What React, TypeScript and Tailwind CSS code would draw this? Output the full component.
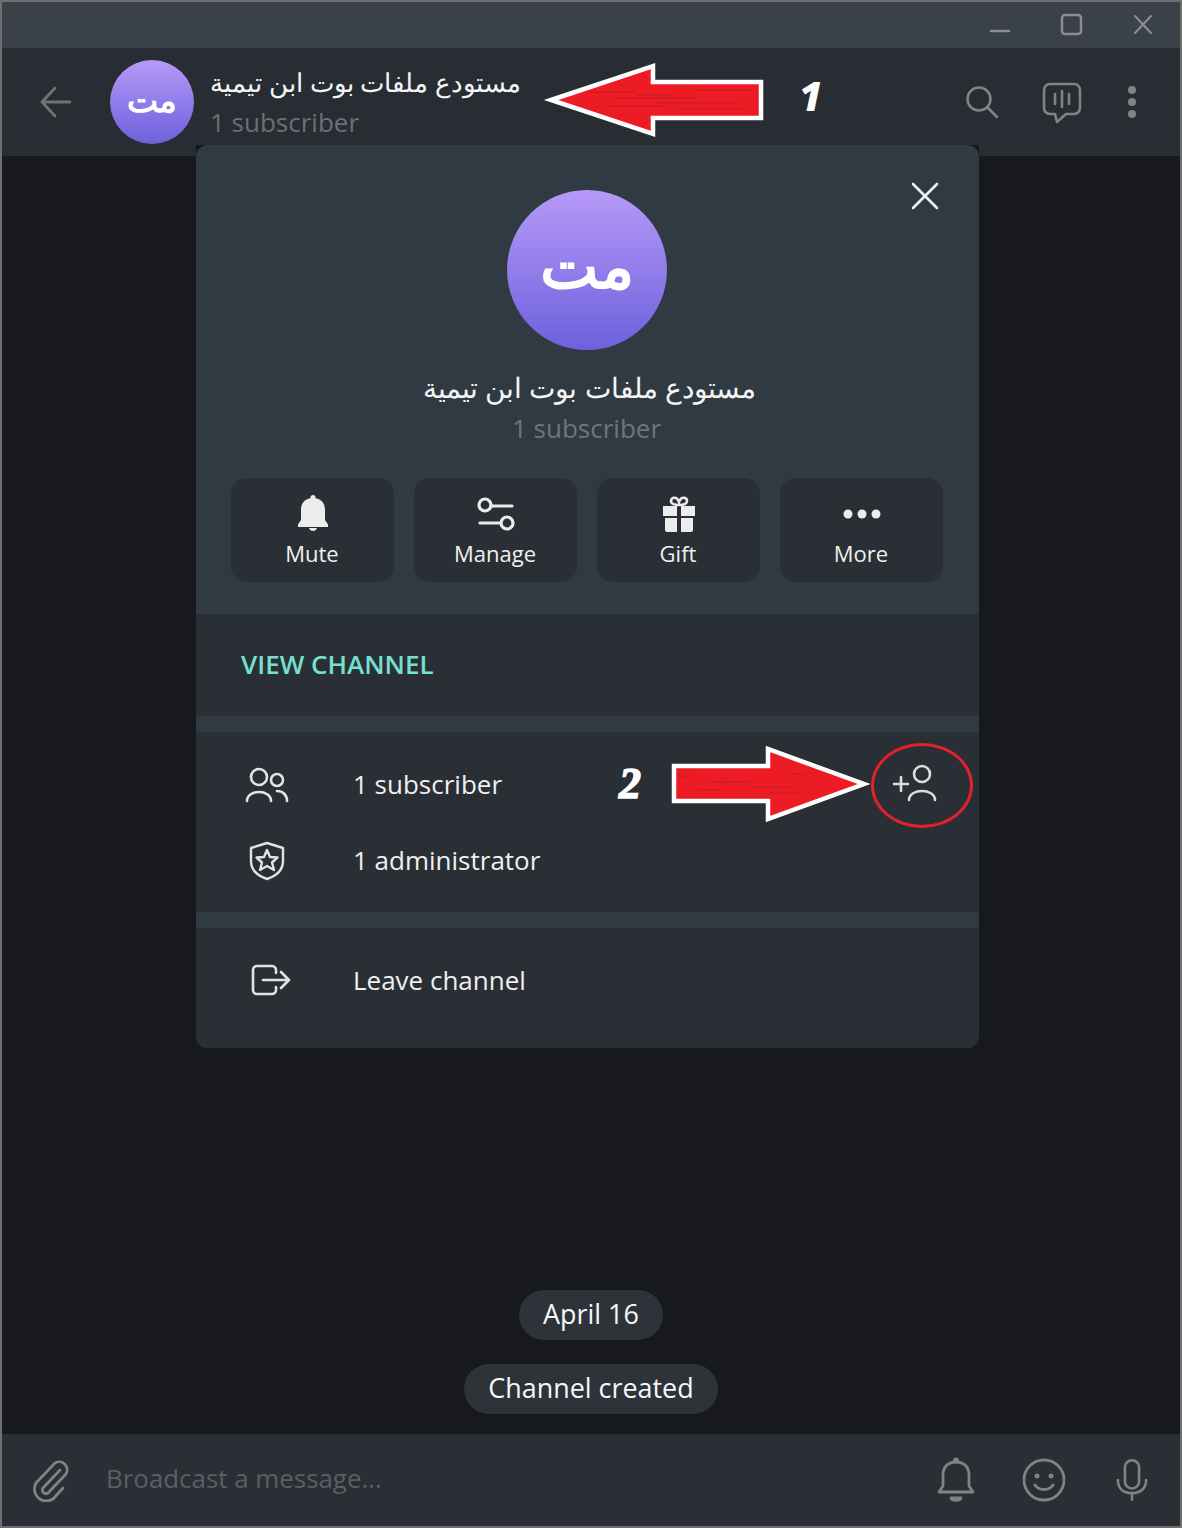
import { X } from "lucide-react";

const font = "font-['Open_Sans',_'Noto_Sans',_sans-serif]";

const streaks = [
  [40, 30, 90],
  [70, 36, 150],
  [110, 41, 190],
  [150, 28, 205],
  [60, 44, 120],
  [130, 47, 200],
  [90, 33, 125],
];

function RedArrow({ left }: { left?: boolean }) {
  return (
    <svg viewBox={left ? "0 0 216 78" : "0 0 200 78"} className="w-full h-full overflow-visible">
      <path
        d={
          left
            ? "M4 38 L106 4 L106 20 L214 20 L214 56 L106 56 L106 72 Z"
            : "M4 21 L98 21 L98 4 L194 39 L98 74 L98 56 L4 56 Z"
        }
        fill="#ed1c24"
        stroke="#fff"
        strokeWidth="4.5"
      />
      {streaks.map(([x1, y, x2], i) => (
        <path
          key={i}
          d={left ? `M${x1} ${y}H${x2}` : `M${x1 - 32} ${y + 1}H${x2 - 70}`}
          stroke="#8f1526"
          strokeOpacity="0.22"
          strokeWidth="2"
        />
      ))}
    </svg>
  );
}

function ActionButton({ label, children }: { label: string; children: React.ReactNode }) {
  return (
    <div className="w-[163px] h-[104px] rounded-[16px] bg-[#2a2e35] flex flex-col items-center pt-[14px]">
      <div className="w-[40px] h-[44px] pl-[2px] flex items-center justify-center">{children}</div>
      <span className="text-[22px] leading-[30px] text-[#f0f0f0] mt-[2px]">{label}</span>
    </div>
  );
}

function InfoRow({ icon, label }: { icon: React.ReactNode; label: string }) {
  return (
    <div className="flex items-center pl-[49px] h-[76px]">
      <div className="w-[108px] flex items-center translate-y-[1px]">{icon}</div>
      <span className="text-[26px] text-[#f0f0f0]">{label}</span>
    </div>
  );
}

export default function App() {
  return (
    <div className={`relative w-[1182px] h-[1528px] border-2 border-[#6f6f6f] flex flex-col overflow-hidden bg-[#18191c] ${font}`}>
      {/* title bar */}
      <div className="h-[46px] bg-[#3a4149] flex items-start justify-end pr-[24px] shrink-0 text-[#8b8f94]">
        <svg width="176" height="46" viewBox="0 0 176 46" fill="none" stroke="currentColor" strokeLinecap="round">
          <path d="M11 29H29" strokeWidth="2.5" />
          <rect x="82" y="13" width="19" height="19" rx="3" strokeWidth="2.5" />
          <path d="M155 14L171 31M171 14L155 31" strokeWidth="2" />
        </svg>
      </div>

      {/* chat header */}
      <div className="h-[108px] bg-[#282c33] flex items-center shrink-0 pl-[38px] pr-[43px]">
        <svg width="32" height="32" viewBox="0 0 32 32" fill="none" stroke="#6f7276" strokeWidth="2.8" strokeLinecap="round" strokeLinejoin="round">
          <path d="M30 16H2M15 2L2 16L15 30" />
        </svg>
        <div className="ml-[38px] w-[84px] h-[84px] rounded-full bg-gradient-to-b from-[#b799f8] to-[#6e60dc] flex items-center justify-center pb-[5px] text-white text-[33px] font-bold">
          مت
        </div>
        <div className="ml-[16px] pt-[2px] flex flex-col">
          <span dir="rtl" className="text-[26px] leading-[36px] font-medium text-[#f5f5f5]">
            مستودع ملفات بوت ابن تيمية
          </span>
          <span className="text-[26px] leading-[40px] mt-[2px] text-[#6c7075]">1 subscriber</span>
        </div>
        <div className="ml-auto flex items-center text-[#7f8286]">
          <svg className="translate-x-[1px]" width="34" height="34" viewBox="0 0 34 34" fill="none" stroke="currentColor" strokeWidth="2.6" strokeLinecap="round">
            <circle cx="14" cy="14" r="11.5" />
            <path d="M22.5 22.5L32 32" />
          </svg>
          <svg className="ml-[44px] translate-y-[1px]" width="40" height="42" viewBox="0 0 40 42" fill="none" stroke="currentColor" strokeWidth="2.6" strokeLinecap="round" strokeLinejoin="round">
            <path d="M8 2H32A6 6 0 0 1 38 8V26A6 6 0 0 1 32 32H24L15 40L13 32H8A6 6 0 0 1 2 26V8A6 6 0 0 1 8 2Z" />
            <path d="M13 12V22M20 9V25M27 12V22" />
          </svg>
          <svg className="ml-[45px]" width="10" height="34" viewBox="0 0 10 34" fill="currentColor">
            <circle cx="5" cy="5" r="4" />
            <circle cx="5" cy="17" r="4" />
            <circle cx="5" cy="29" r="4" />
          </svg>
        </div>
      </div>

      {/* chat body */}
      <div className="flex-1 flex flex-col items-center justify-end pb-[20px] gap-[24px]">
        <div className="h-[50px] px-[24px] pb-[2px] rounded-full bg-[#2e333a] flex items-center text-[#f7f7f7] text-[26.9px] font-medium">April 16</div>
        <div className="h-[50px] px-[24px] pb-[2px] rounded-full bg-[#2e333a] flex items-center text-[#f7f7f7] text-[26.9px] font-medium">Channel created</div>
      </div>

      {/* composer */}
      <div className="h-[92px] bg-[#2a2e35] flex items-center shrink-0 pl-[28px] pr-[32px] text-[#7f8286]">
        <svg width="42" height="44" viewBox="0 0 42 44" fill="none" stroke="currentColor" strokeWidth="2.8" strokeLinecap="round" strokeLinejoin="round">
          <path d="M30 12L13 30A3.6 3.6 0 0 0 18 35L36 16A8 8 0 0 0 25 5L6 25A12 12 0 0 0 23 41L33 30" />
        </svg>
        <span className="ml-[34px] pb-[4px] text-[25.9px] text-[#5b5f64]">Broadcast a message...</span>
        <div className="ml-auto flex items-center gap-[47px]">
          <svg width="38" height="46" viewBox="0 0 38 46" fill="none" stroke="currentColor" strokeWidth="2.8" strokeLinecap="round" strokeLinejoin="round">
            <path d="M2 35L6 29V18C6 10 11 5 19 5C27 5 32 10 32 18V29L36 35Z" />
            <circle cx="19" cy="3.5" r="1.5" fill="currentColor" />
            <path d="M14 41H24C23 44 15 44 14 41Z" fill="currentColor" />
          </svg>
          <svg width="44" height="44" viewBox="0 0 44 44" fill="none" stroke="currentColor" strokeWidth="2.8" strokeLinecap="round">
            <circle cx="22" cy="22" r="20" />
            <circle cx="15" cy="18" r="2.5" fill="currentColor" stroke="none" />
            <circle cx="29" cy="18" r="2.5" fill="currentColor" stroke="none" />
            <path d="M13 27C17 33 27 33 31 27" />
          </svg>
          <svg className="ml-[3px]" width="32" height="46" viewBox="0 0 34 46" fill="none" stroke="currentColor" strokeWidth="2.8" strokeLinecap="round">
            <rect x="9.5" y="2" width="15" height="30" rx="7.5" />
            <path d="M2 23C2 32 8 37 17 37C26 37 32 32 32 23M17 37V44" />
          </svg>
        </div>
      </div>

      {/* channel info modal */}
      <div className="absolute left-[194px] top-[143px] w-[783px] h-[903px] bg-[#18191c]">
        <div className="relative w-full h-full rounded-[12px] overflow-hidden bg-[#303a42] flex flex-col">
          <X className="absolute right-[30px] top-[27px] text-[#f0f0f0]" size={48} strokeWidth={2.6} absoluteStrokeWidth />
          <div className="h-[469px] flex flex-col items-center pt-[45px] pr-[2px] shrink-0">
            <div className="w-[160px] h-[160px] rounded-full bg-gradient-to-b from-[#b799f8] to-[#6e60dc] flex items-center justify-center pb-[12px] text-white text-[62px] font-bold">
              مت
            </div>
            <span dir="rtl" className="mt-[15px] text-[27.8px] leading-[44px] font-medium text-[#f5f5f5] translate-x-[3px]">
              مستودع ملفات بوت ابن تيمية
            </span>
            <span className="text-[26px] leading-[36px] translate-y-[1px] text-[#6f757a]">1 subscriber</span>
            <div className="mt-[33px] flex gap-[20px]">
              <ActionButton label="Mute">
                <svg width="32" height="38" viewBox="0 0 32 38" fill="#ececec">
                  <circle cx="16" cy="2.5" r="2.5" />
                  <path d="M1 29.5L4 25V15C4 7 9 3 16 3C23 3 28 7 28 15V25L31 29.5V32H1Z" />
                  <path d="M12 33H20C19 37 13 37 12 33Z" />
                </svg>
              </ActionButton>
              <ActionButton label="Manage">
                <svg width="38" height="36" viewBox="0 0 38 36" fill="none" stroke="#ececec" strokeWidth="3.2" strokeLinecap="round">
                  <circle cx="8" cy="9" r="6" />
                  <path d="M14 10H35" />
                  <circle cx="30" cy="27" r="6" />
                  <path d="M3 27H24" />
                </svg>
              </ActionButton>
              <ActionButton label="Gift">
                <svg width="34" height="36" viewBox="0 0 34 36" fill="#ececec">
                  <path d="M1 10H15V20H1ZM19 10H33V20H19ZM3 22H15V36H5A2 2 0 0 1 3 34ZM19 22H31V34A2 2 0 0 1 29 36H19Z" />
                  <path d="M17 9C13 9 9 8 9 5C9 1 15 0 17 6C19 0 25 1 25 5C25 8 21 9 17 9Z" fill="none" stroke="#ececec" strokeWidth="2.6" />
                </svg>
              </ActionButton>
              <ActionButton label="More">
                <svg width="38" height="12" viewBox="0 0 38 12" fill="#ececec">
                  <circle cx="5" cy="6" r="4.5" />
                  <circle cx="19" cy="6" r="4.5" />
                  <circle cx="33" cy="6" r="4.5" />
                </svg>
              </ActionButton>
            </div>
          </div>

          <div className="h-[102px] bg-[#2a2e35] flex items-center pl-[45px] pb-[2px] shrink-0">
            <span className="text-[26px] font-semibold text-[#76e0d0]">VIEW CHANNEL</span>
          </div>

          <div className="mt-[16px] h-[180px] bg-[#2a2e35] flex flex-col pt-[14px] relative shrink-0">
            <InfoRow
              label="1 subscriber"
              icon={
                <svg width="44" height="36" viewBox="0 0 44 36" fill="none" stroke="#e3e3e3" strokeWidth="2.6" strokeLinecap="round">
                  <circle cx="14" cy="10" r="8" />
                  <circle cx="32" cy="13" r="6" />
                  <path d="M2 34C2 22 26 22 26 34M32 24C38 24 42 28 42 34" />
                </svg>
              }
            />
            <InfoRow
              label="1 administrator"
              icon={
                <svg className="ml-[4px]" width="36" height="40" viewBox="0 0 36 40" fill="none" stroke="#e3e3e3" strokeWidth="2.4" strokeLinejoin="round">
                  <path d="M18 2L34 7V20C34 29 27 35 18 38C9 35 2 29 2 20V7Z" />
                  <path d="M18 9L21 16L28.5 16.5L23 21.5L25 29L18 25L11 29L13 21.5L7.5 16.5L15 16Z" />
                </svg>
              }
            />
            <svg className="absolute right-[41px] top-[32px]" width="46" height="38" viewBox="0 0 46 38" fill="none" stroke="#dcdcdc" strokeWidth="2.6" strokeLinecap="round">
              <path d="M2 20H16M9 13V27" />
              <circle cx="30" cy="10" r="8" />
              <path d="M17 36C17 24 43 24 43 36" />
            </svg>
          </div>

          <div className="mt-[16px] h-[120px] bg-[#2a2e35] flex items-center pl-[55px] pb-[16px] shrink-0">
            <svg className="w-[102px]" width="102" height="32" viewBox="0 0 102 32" fill="none" stroke="#e3e3e3" strokeWidth="2.6" strokeLinecap="round" strokeLinejoin="round">
              <path d="M25 9V6A4 4 0 0 0 21 2H6A4 4 0 0 0 2 6V26A4 4 0 0 0 6 30H21A4 4 0 0 0 25 26V23M12 16H38M30 8L38 16L30 24" />
            </svg>
            <span className="text-[26px] text-[#f0f0f0]">Leave channel</span>
          </div>
        </div>
      </div>

      {/* annotations */}
      <div className="absolute left-[545px] top-[60px] w-[216px] h-[78px]">
        <RedArrow left />
      </div>
      <span className="absolute left-[797px] top-[69px] text-[40px] leading-[50px] italic font-extrabold text-white">1</span>
      <div className="absolute left-[668px] top-[743px] w-[200px] h-[78px]">
        <RedArrow />
      </div>
      <span className="absolute left-[617px] top-[757px] text-[44px] leading-[50px] italic font-bold text-white font-['Liberation_Serif',_serif] [-webkit-text-stroke:1.5px_white]">2</span>
      <div className="absolute left-[869px] top-[741px] w-[102px] h-[85px] rounded-[50%] border-[3.5px] border-[#e3202c]" />
    </div>
  );
}
